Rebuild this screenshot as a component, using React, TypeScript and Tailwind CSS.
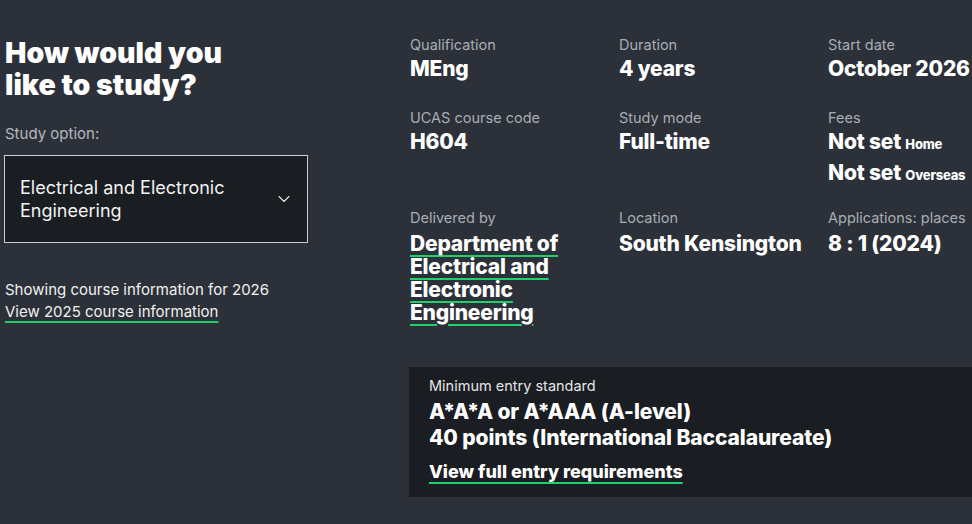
import { ChevronDown } from "lucide-react";

const link = "underline decoration-[#1fd16c] decoration-2 underline-offset-[4px]";

function Fact({ label, children }: { label: string; children: React.ReactNode }) {
  return (
    <div>
      <div className="text-[14.5px] leading-[20px] text-[#a8adb4]">{label}</div>
      <div className="mt-[2px] text-[21px] leading-[23px] font-extrabold tracking-[-0.2px] text-white">{children}</div>
    </div>
  );
}

export default function App() {
  return (
    <div className="min-h-screen w-full overflow-hidden bg-[#2c3139] font-['Inter',sans-serif] text-white">
      <div className="flex pl-[4px] pt-[35px]">
        {/* Study option */}
        <div className="w-[304px] shrink-0">
          <h2 className="mt-[2px] pl-[1px] text-[28.5px] leading-[32px] font-black">
            How would you
            <br />
            like to study?
          </h2>
          <div className="mt-[23px] pl-[1px] text-[15px] leading-[20px] text-[#b4b8be]">Study option:</div>
          <button className="mt-[11px] flex h-[88px] w-[304px] items-center justify-between border border-[#c9ccd0] bg-[#1a1d21] pl-[15px] pr-[13px] text-left">
            <span className="text-[18px] leading-[23px] text-[#f2f2f2]">
              Electrical and Electronic
              <br />
              Engineering
            </span>
            <ChevronDown size={20} strokeWidth={1.3} className="text-[#e6e6e6]" />
          </button>
          <div className="mt-[36px] pl-[1px] text-[15px] leading-[22px] text-[#f0f0f0]">
            <div>Showing course information for 2026</div>
            <a className={link}>View 2025 course information</a>
          </div>
        </div>

        {/* Course facts */}
        <div className="ml-[102px] w-[680px] shrink-0">
          <div className="grid grid-cols-[209px_209px_1fr] gap-y-[28px]">
            <Fact label="Qualification">MEng</Fact>
            <Fact label="Duration">4 years</Fact>
            <Fact label="Start date">October 2026</Fact>
            <Fact label="UCAS course code">H604</Fact>
            <Fact label="Study mode">Full-time</Fact>
            <Fact label="Fees">
              <div>
                Not set <span className="text-[13px] leading-none">Home</span>
              </div>
              <div className="mt-[8px] -mb-[4px]">
                Not set <span className="text-[13px] leading-none">Overseas</span>
              </div>
            </Fact>
            <Fact label="Delivered by">
              <a className={`${link} pr-[40px] pt-[2px] block`}>Department of Electrical and Electronic Engineering</a>
            </Fact>
            <Fact label="Location">
              <div className="pt-[2px]">South Kensington</div>
            </Fact>
            <Fact label="Applications: places">
              <div className="pt-[2px]">8 : 1 (2024)</div>
            </Fact>
          </div>

          <div className="mt-[43px] -ml-[1px] bg-[#1a1d21] pb-[13px] pl-[20px] pt-[9px]">
            <div className="text-[14.5px] leading-[20px] text-[#e4e5e7]">Minimum entry standard</div>
            <div className="mt-[3px] text-[21px] leading-[26px] font-extrabold tracking-[-0.1px]">A*A*A or A*AAA (A-level)</div>
            <div className="text-[21px] leading-[26px] font-extrabold tracking-[-0.1px]">40 points (International Baccalaureate)</div>
            <a className={`${link} mt-[9px] inline-block text-[18px] leading-[23px] font-extrabold`}>
              View full entry requirements
            </a>
          </div>
        </div>
      </div>
    </div>
  );
}
